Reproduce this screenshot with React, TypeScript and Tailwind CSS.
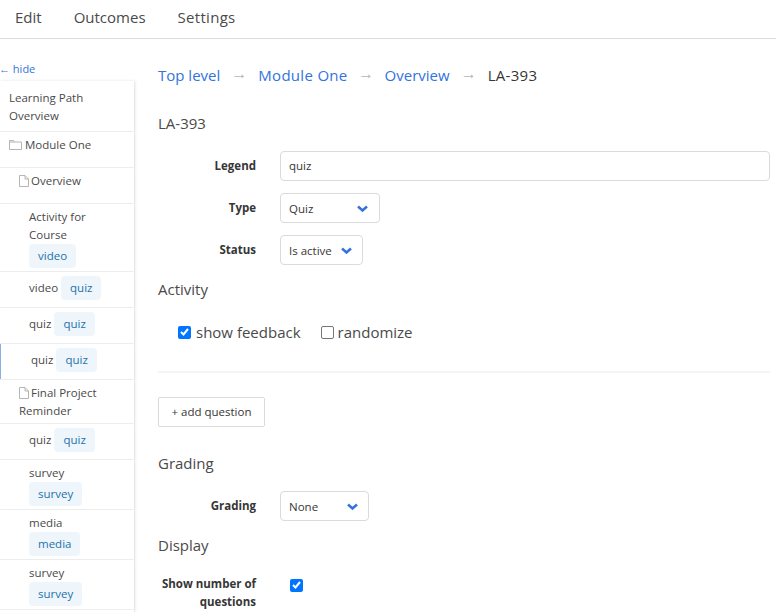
import { ReactNode } from 'react';

const font = { fontFamily: '"Open Sans", "Noto Sans", sans-serif' };

function FileIcon() {
  return (
    <svg width="10" height="12" viewBox="0 0 10 12" className="inline-block mr-[2px] -mt-[2px] align-middle" fill="none" stroke="#b5b5b5">
      <path d="M.5.5h5.500l3.500 3.500v7.500h-9z M6 .5v3.500h3.500" />
    </svg>
  );
}

function FolderIcon() {
  return (
    <svg width="13" height="10" viewBox="0 0 13 10" className="inline-block mr-[3px] -mt-[2px] align-middle" fill="none" stroke="#b5b5b5">
      <path d="M.5 9.500v-9h4l1 1.500h7v7.500z M.5 2h5" />
    </svg>
  );
}

function Tag({ children }: { children: ReactNode }) {
  return (
    <span className="inline-flex items-center h-6 px-[9px] rounded-[4px] bg-[#eef6fc] text-[#1d72aa] text-[11.5px] leading-none">
      {children}
    </span>
  );
}

function Item({ children, h, className = '' }: { children: ReactNode; h: string; className?: string }) {
  return (
    <div className={`${h} shrink-0 mb-px shadow-[0_1px_2px_rgba(10,10,10,0.1)] bg-white text-[11.5px] leading-[18px] text-[#4a4a4a] ${className}`}>
      {children}
    </div>
  );
}

function Arrow({ w }: { w: string }) {
  return (
    <span className={`${w} text-center text-[#b5b5b5] text-[16px] leading-[22px]`} style={{ fontFamily: '"Liberation Sans", sans-serif' }}>
      →
    </span>
  );
}

function Sidebar() {
  return (
    <div className="w-[134px] shrink-0">
      <div className="h-[22px] pt-[1px] -ml-[1px] text-[11px] leading-[18px] text-[#3273dc] whitespace-nowrap">
        <span style={{ fontFamily: '"Liberation Sans", sans-serif' }}>←</span> hide
      </div>
      <div className="shadow-[1px_0_3px_rgba(10,10,10,0.1)]">
        <Item h="h-[50px]" className="pl-[9px] pt-[8px]">Learning Path<br />Overview</Item>
        <Item h="h-[35px]" className="pl-[9px] pt-[4px]"><FolderIcon />Module One</Item>
        <Item h="h-[35px]" className="pl-[19px] pt-[4px]"><FileIcon />Overview</Item>
        <Item h="h-[67px]" className="pl-[29px] pt-[4px]">
          Activity for<br />Course<br /><Tag>video</Tag>
        </Item>
        <Item h="h-[35px]" className="pl-[29px] pt-[4px] flex items-start gap-[3px]">
          <span className="mt-[3px]">video</span><Tag>quiz</Tag>
        </Item>
        <Item h="h-[35px]" className="pl-[29px] pt-[4px] flex items-start gap-[3px]">
          <span className="mt-[3px]">quiz</span><Tag>quiz</Tag>
        </Item>
        <Item h="h-[35px]" className="pl-[30px] pt-[4px] flex items-start gap-[3px] border-l border-[#8ab0ea]">
          <span className="mt-[3px]">quiz</span><Tag>quiz</Tag>
        </Item>
        <Item h="h-[43px]" className="pl-[19px] pt-[4px]"><FileIcon />Final Project<br />Reminder</Item>
        <Item h="h-[35px]" className="pl-[29px] pt-[4px] flex items-start gap-[3px]">
          <span className="mt-[3px]">quiz</span><Tag>quiz</Tag>
        </Item>
        <Item h="h-[49px]" className="pl-[29px] pt-[4px]">survey<br /><Tag>survey</Tag></Item>
        <Item h="h-[49px]" className="pl-[29px] pt-[4px]">media<br /><Tag>media</Tag></Item>
        <Item h="h-[49px]" className="pl-[29px] pt-[4px]">survey<br /><Tag>survey</Tag></Item>
        <Item h="h-[40px]"><span /></Item>
      </div>
    </div>
  );
}

function Select({ value, w, pad }: { value: string; w: string; pad: string }) {
  return (
    <div className={`${w} h-[30px] border border-[#dbdbdb] rounded-[4px] flex items-center justify-between pl-[8px] ${pad} text-[11.5px] text-[#363636]`}>
      <span className="pt-[2px]">{value}</span>
      <svg width="11" height="7" viewBox="0 0 11 7" fill="none" stroke="#3273dc" strokeWidth="2.500">
        <path d="M1 1.500l4.500 4 4.500-4" />
      </svg>
    </div>
  );
}

function Row({ label, children, className = '' }: { label: ReactNode; children: ReactNode; className?: string }) {
  return (
    <div className={`flex items-start ${className}`}>
      <div className="w-[98px] mr-[24px] text-right text-[11.5px] leading-[18px] font-bold text-[#363636] pt-[6px] whitespace-nowrap">{label}</div>
      <div className="flex-1">{children}</div>
    </div>
  );
}

function Check({ on }: { on: boolean }) {
  if (!on) return <span className="inline-block w-[13px] h-[13px] rounded-[2px] border border-[#767676] bg-white" />;
  return (
    <span className="inline-flex items-center justify-center w-[13px] h-[13px] rounded-[2px] bg-[#0075ff]">
      <svg width="9" height="8" viewBox="0 0 9 8" fill="none" stroke="white" strokeWidth="2"><path d="M1 4l2.500 2.500L8 1" /></svg>
    </span>
  );
}

export default function App() {
  return (
    <div className="w-[776px] h-[612px] overflow-hidden bg-white" style={font}>
      <nav className="h-[39px] pb-[3px] border-b border-[#dbdbdb] flex items-center text-[15px] text-[#4a4a4a]">
        <span className="ml-[15px]">Edit</span>
        <span className="ml-[32px]">Outcomes</span>
        <span className="ml-[32px] tracking-[0.3px]">Settings</span>
      </nav>
      <div className="flex pt-[20px]">
        <Sidebar />
        <main className="ml-[24px] w-[612px] pt-[4px]">
          <div className="flex items-start h-[25px] leading-[24px] text-[15px] text-[#3273dc]">
            <span>Top level</span>
            <Arrow w="w-[38px]" />
            <span className="tracking-[0.3px]">Module One</span>
            <Arrow w="w-[37px]" />
            <span>Overview</span>
            <Arrow w="w-[38px]" />
            <span className="text-[#363636] tracking-[0.3px]">LA-393</span>
          </div>
          <h2 className="mt-[24px] h-[24px] leading-[22px] text-[15px] text-[#4a4a4a]">LA-393</h2>
          <Row label="Legend" className="mt-[15px]">
            <div className="h-[30px] border border-[#dbdbdb] rounded-[4px] flex items-center pl-[8px] text-[11.5px] text-[#363636]">quiz</div>
          </Row>
          <Row label="Type" className="mt-[12px]">
            <Select value="Quiz" w="w-[100px]" pad="pr-[11px]" />
          </Row>
          <Row label="Status" className="mt-[12px]">
            <Select value="Is active" w="w-[83px]" pad="pr-[10px]" />
          </Row>
          <h3 className="mt-[13px] h-[24px] leading-[22px] text-[15px] text-[#4a4a4a]">Activity</h3>
          <div className="mt-[18px] h-[24px] pl-[20px] flex items-center text-[15px] text-[#4a4a4a]">
            <Check on />
            <span className="ml-[5px]">show feedback</span>
            <span className="ml-[20px] flex items-center"><Check on={false} /></span>
            <span className="ml-[4px]">randomize</span>
          </div>
          <div className="mt-[27px] h-[2px] bg-[#f5f5f5]" />
          <button className="block mt-[24px] w-[107px] h-[30px] border border-[#dbdbdb] rounded-[2px] text-[11.5px] text-[#363636]">+ add question</button>
          <h3 className="mt-[25px] h-[24px] leading-[22px] text-[15px] text-[#4a4a4a]">Grading</h3>
          <Row label="Grading" className="mt-[15px]">
            <Select value="None" w="w-[89px]" pad="pr-[10px]" />
          </Row>
          <h3 className="mt-[13px] h-[24px] leading-[22px] text-[15px] text-[#4a4a4a]">Display</h3>
          <Row label={<>Show number of<br />questions</>} className="mt-[11px]">
            <div className="pl-[10px] pt-[6px] leading-none"><Check on /></div>
          </Row>
        </main>
      </div>
    </div>
  );
}
